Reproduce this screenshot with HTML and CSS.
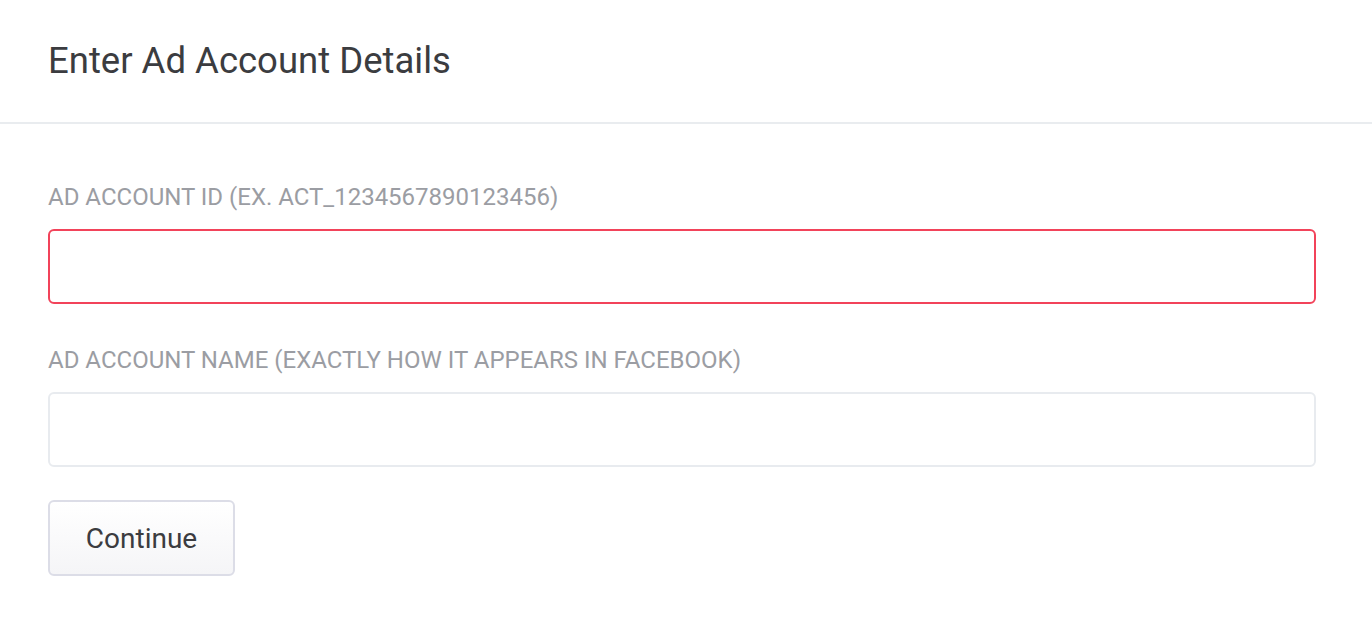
FILE: index.html
```html
<!DOCTYPE html>
<html lang="en">
<head>
  <meta charset="UTF-8">
  <meta name="viewport" content="width=device-width, initial-scale=1.0">
  <title>Enter Ad Account Details</title>
  <link rel="stylesheet" href="styles.css">
</head>
<body>
  <div class="modal-header">
    <h1>Enter Ad Account Details</h1>
  </div>

  <form class="modal-body">
    <label class="field-label" for="accountId">Ad Account ID (ex. act_1234567890123456)</label>
    <input class="field-input has-error" type="text" id="accountId" name="accountId">

    <label class="field-label" for="accountName">Ad Account Name (exactly how it appears in Facebook)</label>
    <input class="field-input" type="text" id="accountName" name="accountName">

    <div class="actions">
      <button type="submit" class="btn">Continue</button>
    </div>
  </form>
</body>
</html>
```

FILE: styles.css
```css
body {
  margin: 0;
  background-color: #fff;
  color: #3b3c40;
  font-family: Roboto, 'Noto Sans', sans-serif;
}
.modal-header {
  height: 124px;
  padding: 39px 48px 0;
  border-bottom: 2px solid #e9ecef;
  box-sizing: border-box;
}
.modal-header h1 {
  margin: 0;
  font-size: 36.5px;
  line-height: 43px;
  font-weight: 400;
  color: #3b3c40;
}
.modal-body {
  padding: 59px 56px 40px 48px;
  display: flex;
  flex-direction: column;
}
.field-label {
  font-size: 24px;
  line-height: 28px;
  text-transform: uppercase;
  color: #9b9da3;
  margin-bottom: 18px;
}
.field-input {
  height: 75px;
  box-sizing: border-box;
  border: 2px solid #e8ebef;
  border-radius: 6px;
  background: #fff;
  padding: 0 16px;
  font-size: 24px;
  font-family: inherit;
  margin-bottom: 42px;
  outline: none;
}
.field-input.has-error {
  border-color: #f2435a;
}
.actions {
  margin-top: -9px;
}
.btn {
  width: 187px;
  height: 76px;
  background: linear-gradient(#fff, #f5f5f7);
  border: 2px solid #dcdde7;
  border-radius: 6px;
  font-family: inherit;
  font-size: 28px;
  color: #3b3c40;
  cursor: pointer;
}
```
